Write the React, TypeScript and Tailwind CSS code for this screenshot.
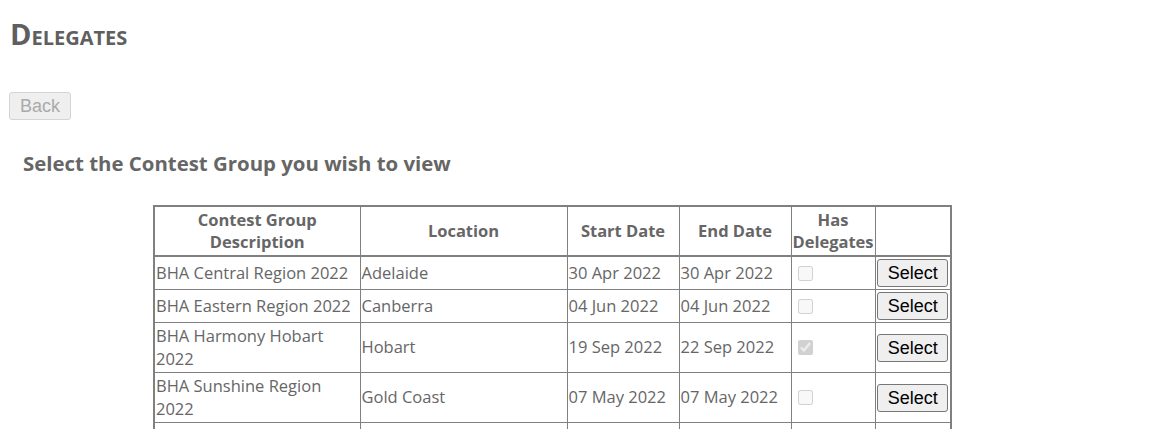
import React from "react";

type Group = {
  name: string;
  location: string;
  start: string;
  end: string;
  hasDelegates: boolean;
};

const groups: Group[] = [
  { name: "BHA Central Region 2022", location: "Adelaide", start: "30 Apr 2022", end: "30 Apr 2022", hasDelegates: false },
  { name: "BHA Eastern Region 2022", location: "Canberra", start: "04 Jun 2022", end: "04 Jun 2022", hasDelegates: false },
  { name: "BHA Harmony Hobart 2022", location: "Hobart", start: "19 Sep 2022", end: "22 Sep 2022", hasDelegates: true },
  { name: "BHA Sunshine Region 2022", location: "Gold Coast", start: "07 May 2022", end: "07 May 2022", hasDelegates: false },
  { name: "BHA Victorian Region 2022", location: "Melbourne", start: "21 May 2022", end: "21 May 2022", hasDelegates: false },
];

export default function App() {
  return (
    <div className="min-h-screen bg-white text-[#666] font-['Open_Sans',sans-serif]">
      <div className="pl-[10px] pt-[19px]">
        {/* Page title */}
        <h1 className="text-[29px] font-bold leading-[30px] text-[#5f5f5f] [font-variant:small-caps]">
          Delegates
        </h1>

        <button
          disabled
          className="mt-[43px] -ml-px h-[28px] px-[10px] rounded-[3px] border border-[#d4d4d4] bg-[#efefef] text-[18px] leading-none text-[#aaa] font-['Liberation_Sans',sans-serif]"
        >
          Back
        </button>

        <h2 className="mt-[29px] ml-[13px] text-[20.4px] font-bold leading-[28px] text-[#666]">
          Select the Contest Group you wish to view
        </h2>
      </div>

      {/* Contest group table */}
      <table className="mt-[28px] ml-[153px] w-[797px] table-fixed border-collapse border-2 border-[#808080] text-[16.5px] leading-[22.5px]">
        <colgroup>
          <col className="w-[206px]" />
          <col className="w-[207px]" />
          <col className="w-[112px]" />
          <col className="w-[112px]" />
          <col className="w-[84px]" />
          <col className="w-[76px]" />
        </colgroup>
        <thead>
          <tr className="border-b-2 border-[#808080]">
            <th className="border border-[#808080] px-[1px] py-[1.5px] font-bold text-center">
              Contest Group
              <br />
              Description
            </th>
            <th className="border border-[#808080] px-[1px] font-bold text-center">Location</th>
            <th className="border border-[#808080] px-[1px] font-bold text-center">Start Date</th>
            <th className="border border-[#808080] px-[1px] font-bold text-center">End Date</th>
            <th className="border border-[#808080] px-0 font-bold text-center">
              Has
              <br />
              Delegates
            </th>
            <th className="border border-[#808080]" />
          </tr>
        </thead>
        <tbody>
          {groups.map((g) => (
            <tr key={g.name}>
              <td className="border border-[#808080] px-[1px] py-[2px] align-middle">{g.name}</td>
              <td className="border border-[#808080] px-[1px] align-middle">{g.location}</td>
              <td className="border border-[#808080] px-[1px] align-middle whitespace-nowrap">{g.start}</td>
              <td className="border border-[#808080] px-[1px] align-middle whitespace-nowrap">{g.end}</td>
              <td className="border border-[#808080] pl-[6px] align-middle">
                <input
                  type="checkbox"
                  disabled
                  defaultChecked={g.hasDelegates}
                  className="block h-[15px] w-[15px]"
                />
              </td>
              <td className="border border-[#808080] px-[1px] py-[2px] align-middle text-center">
                <button className="h-[28px] w-[71px] rounded-[3px] border border-[#767676] bg-[#efefef] text-[18px] leading-none text-black font-['Liberation_Sans',sans-serif]">
                  Select
                </button>
              </td>
            </tr>
          ))}
        </tbody>
      </table>
    </div>
  );
}
